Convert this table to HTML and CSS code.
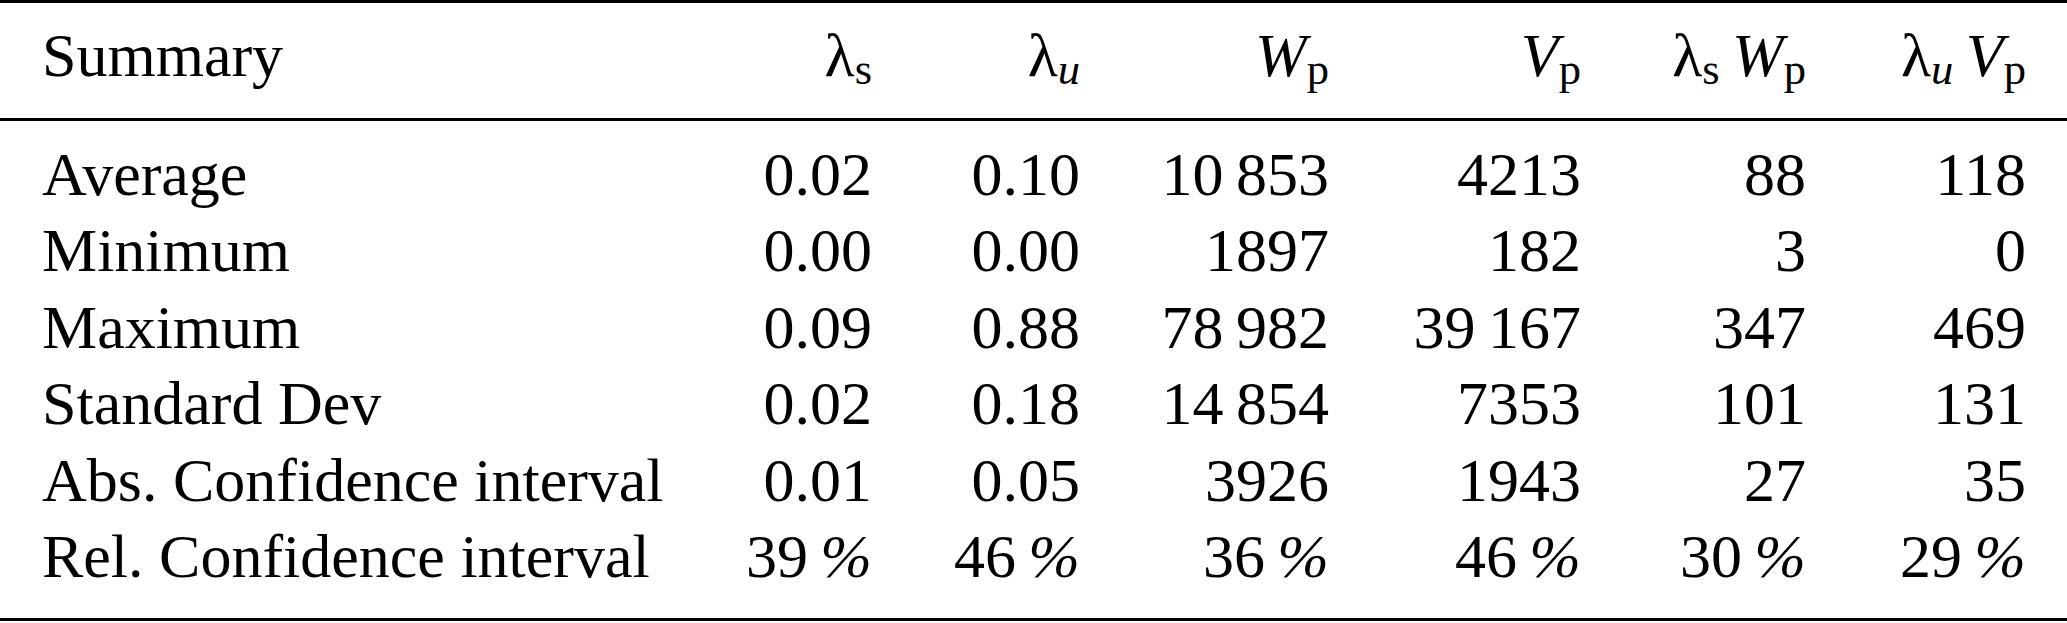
FILE: index.html
```html
<!DOCTYPE html>
<html lang="en">

<head>
    <meta charset="utf-8">
    <meta name="viewport" content="width=device-width, initial-scale=1.0">
    <title>Summary</title>
    <link rel="stylesheet" href="styles.css">
</head>

<body>
    <table class="summary">
        <colgroup>
            <col class="c-label">
            <col class="c-ls">
            <col class="c-lu">
            <col class="c-wp">
            <col class="c-vp">
            <col class="c-lswp">
            <col class="c-luvp">
        </colgroup>
        <thead>
            <tr>
                <th>Summary</th>
                <th>λ<span class="sub">s</span></th>
                <th>λ<span class="sub it">u</span></th>
                <th><span class="it">W</span><span class="sub">p</span></th>
                <th><span class="it">V</span><span class="sub">p</span></th>
                <th>λ<span class="sub">s</span>&#8201;<span class="it">W</span><span class="sub">p</span></th>
                <th>λ<span class="sub it">u</span>&#8201;<span class="it">V</span><span class="sub">p</span></th>
            </tr>
        </thead>
        <tbody>
            <tr>
                <td>Average</td>
                <td>0.02</td>
                <td>0.10</td>
                <td>10&#8201;853</td>
                <td>4213</td>
                <td>88</td>
                <td>118</td>
            </tr>
            <tr>
                <td>Minimum</td>
                <td>0.00</td>
                <td>0.00</td>
                <td>1897</td>
                <td>182</td>
                <td>3</td>
                <td>0</td>
            </tr>
            <tr>
                <td>Maximum</td>
                <td>0.09</td>
                <td>0.88</td>
                <td>78&#8201;982</td>
                <td>39&#8201;167</td>
                <td>347</td>
                <td>469</td>
            </tr>
            <tr>
                <td>Standard Dev</td>
                <td>0.02</td>
                <td>0.18</td>
                <td>14&#8201;854</td>
                <td>7353</td>
                <td>101</td>
                <td>131</td>
            </tr>
            <tr>
                <td>Abs. Confidence interval</td>
                <td>0.01</td>
                <td>0.05</td>
                <td>3926</td>
                <td>1943</td>
                <td>27</td>
                <td>35</td>
            </tr>
            <tr>
                <td>Rel. Confidence interval</td>
                <td>39&#8201;<span class="pct">%</span></td>
                <td>46&#8201;<span class="pct">%</span></td>
                <td>36&#8201;<span class="pct">%</span></td>
                <td>46&#8201;<span class="pct">%</span></td>
                <td>30&#8201;<span class="pct">%</span></td>
                <td>29&#8201;<span class="pct">%</span></td>
            </tr>
        </tbody>
    </table>
</body>
</html>
```

FILE: styles.css
```css
html {
    margin: 0;
    background: #fff;
}

body {
    margin: 0;
    font-family: "Liberation Serif", "Times New Roman", serif;
    color: #000;
}

.summary {
    width: 2067px;
    table-layout: fixed;
    border-collapse: separate;
    border-spacing: 0;
    border-top: 3px solid #000;
    border-bottom: 3px solid #000;
    font-size: 62px;
}

.c-label { width: 664px; }
.c-ls { width: 208px; }
.c-lu { width: 208px; }
.c-wp { width: 249px; }
.c-vp { width: 252px; }
.c-lswp { width: 225px; }
.c-luvp { width: 261px; }

.summary th,
.summary td {
    padding: 0;
    font-weight: normal;
    text-align: right;
    white-space: nowrap;
    line-height: 76.4px;
}

.summary th:first-child,
.summary td:first-child {
    text-align: left;
    padding-left: 42px;
}

.summary th:last-child,
.summary td:last-child {
    padding-right: 41px;
}

.summary thead th {
    line-height: 76px;
    padding-top: 14px;
    padding-bottom: 25px;
    border-bottom: 3px solid #000;
}

.summary tbody tr:first-child td {
    padding-top: 15px;
}

.summary tbody tr:last-child td {
    padding-bottom: 24px;
}

.it {
    font-style: italic;
}

.sub {
    font-size: 0.72em;
    line-height: 0;
    vertical-align: -0.17em;
}

.pct {
    font-style: italic;
}
```
